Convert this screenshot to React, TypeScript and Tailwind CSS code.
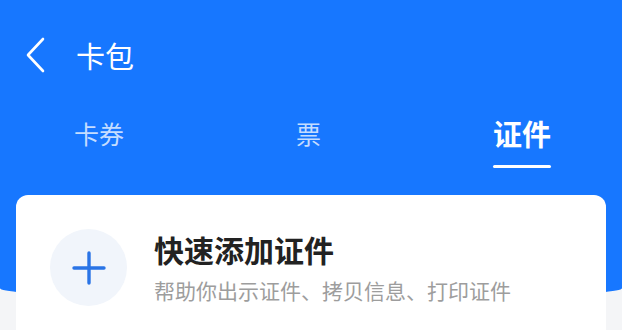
export default function App() {
  const tabs = [
    { label: "卡券", active: false },
    { label: "票", active: false },
    { label: "证件", active: true },
  ]

  return (
    <div
      className="w-[622px] h-[330px] overflow-hidden bg-[#f4f5f7]"
      style={{ fontFamily: '"Noto Sans CJK SC", "Noto Sans", sans-serif' }}
    >
      <div className="h-[300px] bg-[#1777ff] rounded-bl-[60%_14px] rounded-br-[60%_14px] pt-[33px]">
        <div className="flex items-center h-[44px] pl-[24px]">
          <svg width="22" height="36" viewBox="0 0 22 36" fill="none">
            <path d="M19 2 L4 18 L19 34" stroke="white" strokeWidth="2.6" strokeLinecap="round" strokeLinejoin="round" />
          </svg>
          <span className="ml-[30px] text-[29px] leading-none text-white">卡包</span>
        </div>
        <div className="flex justify-between items-start mt-[39px] pl-[74px] pr-[71px]">
          {tabs.map((t) => (
            <div key={t.label} className="flex flex-col items-stretch">
              <span
                className={
                  t.active
                    ? "text-[29px] leading-[34px] font-bold text-white"
                    : "text-[25px] leading-[34px] text-white/75"
                }
              >
                {t.label}
              </span>
              <div className={"mt-[15px] h-[3px] rounded-full " + (t.active ? "bg-white" : "bg-transparent")} />
            </div>
          ))}
        </div>
      </div>
      <div className="mx-[16px] -mt-[105px] h-[200px] bg-white rounded-[12px] flex items-start pt-[34px] pl-[34px]">
        <div className="w-[77px] h-[77px] rounded-full bg-[#f1f5fb] flex items-center justify-center">
          <svg width="34" height="34" viewBox="0 0 34 34">
            <path d="M17 2 V32 M2 17 H32" stroke="#2a74e6" strokeWidth="3.4" strokeLinecap="round" />
          </svg>
        </div>
        <div className="ml-[27px]">
          <div className="text-[30px] leading-[40px] font-bold text-[#222]">快速添加证件</div>
          <div className="mt-[8px] text-[21px] leading-[26px] text-[#9d9d9d]">帮助你出示证件、拷贝信息、打印证件</div>
        </div>
      </div>
    </div>
  )
}
